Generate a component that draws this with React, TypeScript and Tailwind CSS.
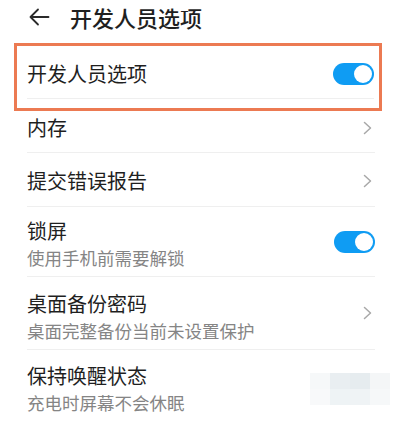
import React from "react";

const FONT = { fontFamily: '"Noto Sans CJK SC", "Noto Sans", sans-serif' };

function Toggle() {
  return (
    <div className="flex h-[22px] w-[41px] shrink-0 items-center justify-end rounded-full bg-[#0f9cf3] pr-[2px]">
      <div className="h-[18px] w-[18px] rounded-full bg-white" />
    </div>
  );
}

function Chevron() {
  return (
    <svg width="9" height="14" viewBox="0 0 9 14" className="mr-[3px] shrink-0">
      <path d="M1.5 1.5 L7.5 7 L1.5 12.5" fill="none" stroke="#a8a8a8" strokeWidth="1.5" strokeLinecap="round" strokeLinejoin="round" />
    </svg>
  );
}

function Title({ children }: { children: React.ReactNode }) {
  return <div className="text-[20px] leading-[27px] text-[#1f1f1f]">{children}</div>;
}

function Sub({ children }: { children: React.ReactNode }) {
  return <div className="text-[17.5px] leading-[27px] text-[#858585]">{children}</div>;
}

export default function App() {
  return (
    <div className="relative h-[423px] w-[402px] overflow-hidden bg-white" style={FONT}>
      {/* header */}
      <div className="flex h-[43px] items-start pl-[28px] pt-[2px]">
        <svg width="22" height="20" viewBox="0 0 22 20" className="mt-[5px]">
          <path d="M20.5 10 H2.5 M10 2.5 L2.5 10 L10 17.5" fill="none" stroke="#2a2a2a" strokeWidth="1.8" strokeLinecap="round" strokeLinejoin="round" />
        </svg>
        <div className="ml-[20px] text-[22px] font-medium leading-[30px] text-[#1f1f1f]">开发人员选项</div>
      </div>

      {/* highlighted row */}
      <div className="ml-[14px] w-[368px] border-[3px] border-[#ec7a52] pb-[9px] pl-[10px] pr-[5px]">
        <div className="flex h-[53px] items-center justify-between border-b border-[#efefef] pt-[3px]">
          <Title>开发人员选项</Title>
          <Toggle />
        </div>
      </div>

      <div className="px-[27px]">
        <div className="flex h-[42px] items-center justify-between border-b border-[#efefef] pb-[8px]">
          <Title>内存</Title>
          <Chevron />
        </div>
        <div className="flex h-[54px] items-center justify-between border-b border-[#efefef] pt-[2px]">
          <Title>提交错误报告</Title>
          <Chevron />
        </div>
        <div className="flex h-[70px] items-center justify-between border-b border-[#efefef]">
          <div className="mt-[5px]">
            <Title>锁屏</Title>
            <Sub>使用手机前需要解锁</Sub>
          </div>
          <Toggle />
        </div>
        <div className="flex h-[73px] items-center justify-between border-b border-[#efefef]">
          <div className="mt-[7px]">
            <Title>桌面备份密码</Title>
            <Sub>桌面完整备份当前未设置保护</Sub>
          </div>
          <Chevron />
        </div>
        <div className="flex h-[73px] items-center justify-between">
          <div className="mt-[4px]">
            <Title>保持唤醒状态</Title>
            <Sub>充电时屏幕不会休眠</Sub>
          </div>
        </div>
      </div>

      {/* blurred watermark */}
      <div className="absolute left-[310px] top-[373px] grid h-[32px] w-[80px] grid-cols-4 grid-rows-2 opacity-90">
        <div className="bg-[#f6f8f9]" />
        <div className="bg-[#e7edf0]" />
        <div className="bg-[#e4eaee]" />
        <div className="bg-[#f3f6f7]" />
        <div className="bg-[#f8f9fa]" />
        <div className="bg-[#edf2f4]" />
        <div className="bg-[#eef2f4]" />
        <div className="bg-[#f6f8f9]" />
      </div>
    </div>
  );
}
